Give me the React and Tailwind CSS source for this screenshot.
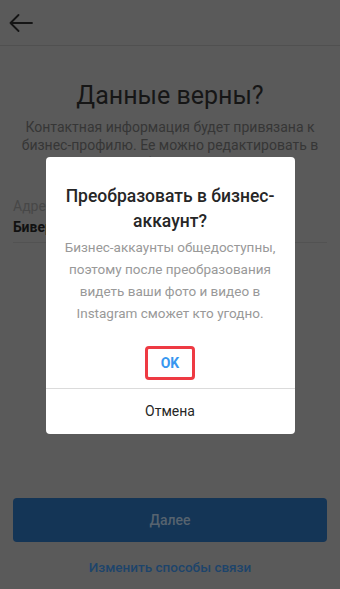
import React from 'react'

function BackArrow() {
  return (
    <svg width="24" height="18" viewBox="0 0 24 18" fill="none">
      <path d="M23 9H1.5M9.5 1L1.5 9L9.5 17" stroke="#151515" strokeWidth="1.8" strokeLinecap="round" strokeLinejoin="round" />
    </svg>
  )
}

export default function App() {
  return (
    <div className="relative h-[589px] w-full overflow-hidden bg-[#5a5a5a] font-['Roboto',sans-serif]">
      {/* Page under the dialog (shown dimmed) */}
      <div className="flex h-full flex-col">
        <div className="flex h-[46px] items-center border-b border-[#505050] px-[9px]">
          <BackArrow />
        </div>

        <h1 className="mt-[33px] text-center text-[25px] leading-[33px] text-[#161616]">
          Данные верны?
        </h1>
        <p className="mt-[6px] px-[20px] text-center text-[14px] leading-[18px] text-[#363636]">
          Контактная информация будет привязана к<br />
          бизнес-профилю. Ее можно редактировать в<br />
          любое время.
        </p>

        <div className="mx-[13px] mt-[25px] border-b border-[#525252] pb-[6px]">
          <div className="text-[14px] leading-[18px] text-[#474747]">Адрес эл. почты</div>
          <div className="mt-[3px] text-[14px] font-bold leading-[18px] text-[#111111]">Бивер</div>
        </div>

        <div className="flex-1" />

        <button className="mx-[13px] h-[44px] rounded-[4px] bg-[#143556] text-[14px] font-medium text-[#56636f]">
          Далее
        </button>
        <div className="mb-[13px] mt-[16px] text-center text-[13.5px] font-medium leading-[18px] text-[#1d446b]">
          Изменить способы связи
        </div>
      </div>

      {/* Dialog */}
      <div className="absolute inset-0 flex items-center justify-center">
        <div className="mt-[1px] w-[249px] rounded-[4px] bg-white">
          <div className="px-[12px] pt-[27px] text-center text-[17.5px] font-medium leading-[25px] text-[#262626]">
            Преобразовать в бизнес-<br />аккаунт?
          </div>
          <p className="mt-[2px] px-[12px] text-center text-[13.5px] leading-[22px] text-[#999999]">
            Бизнес-аккаунты общедоступны,<br />
            поэтому после преобразования<br />
            видеть ваши фото и видео в<br />
            Instagram сможет кто угодно.
          </p>
          <div className="mt-[15px] flex h-[49px] items-center justify-center">
            <button className="flex h-[34px] w-[50px] items-center justify-center rounded-[4px] border-[3px] border-[#ee3a43] text-[14px] font-bold text-[#3897f0]">
              OK
            </button>
          </div>
          <div className="border-t border-[#dbdbdb]" />
          <button className="flex h-[45px] w-full items-center justify-center text-[14px] text-[#262626]">
            Отмена
          </button>
        </div>
      </div>
    </div>
  )
}
